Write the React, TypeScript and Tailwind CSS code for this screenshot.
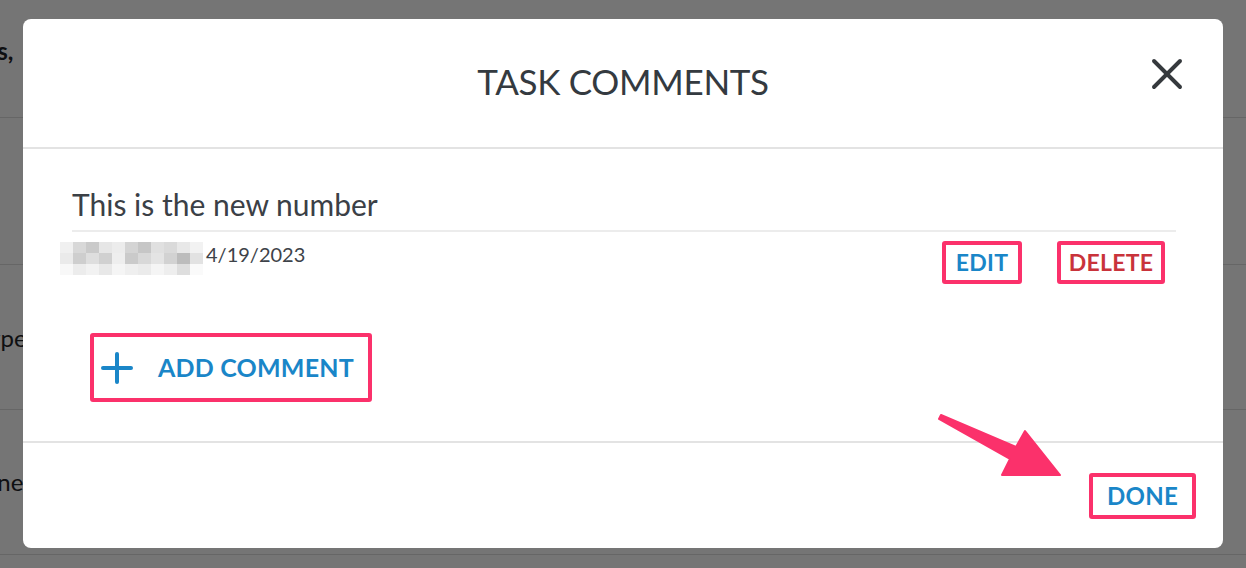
import { X, Plus } from "lucide-react";

const PIXELS = [
  ["bg-[#f0f0f0]", "bg-[#d8d8d8]", "bg-[#cacaca]", "bg-[#e6e6e6]", "bg-[#ececec]", "bg-[#d4d4d4]", "bg-[#c6c6c6]", "bg-[#e0e0e0]", "bg-[#dadada]", "bg-[#e8e8e8]", "bg-[#f2f2f2]"],
  ["bg-[#eaeaea]", "bg-[#cecece]", "bg-[#dedede]", "bg-[#d0d0d0]", "bg-[#eeeeee]", "bg-[#cacaca]", "bg-[#d8d8d8]", "bg-[#e4e4e4]", "bg-[#d2d2d2]", "bg-[#bcbcbc]", "bg-[#e2e2e2]"],
  ["bg-[#f8f8f8]", "bg-[#ececec]", "bg-[#f2f2f2]", "bg-[#e8e8e8]", "bg-[#f5f5f5]", "bg-[#efefef]", "bg-[#ebebeb]", "bg-[#f5f5f5]", "bg-[#eeeeee]", "bg-[#dedede]", "bg-[#fafafa]"],
];

function Blurred() {
  return (
    <div className="flex flex-col">
      {PIXELS.map((row, i) => (
        <div key={i} className="flex">
          {row.map((c, j) => (
            <div key={j} className={`w-[13px] h-[11px] ${c}`} />
          ))}
        </div>
      ))}
    </div>
  );
}

export default function App() {
  return (
    <div className="relative w-[1246px] h-[568px] overflow-hidden bg-white font-['Lato',sans-serif]">
      {/* page behind the modal */}
      <div className="flex flex-col text-[24px] text-[#1f2328]">
        <div className="h-[118px] border-b border-[#dedede] flex items-start pt-[33px]">
          <span className="ml-[-50px] font-bold whitespace-nowrap">Tasks,</span>
        </div>
        <div className="h-[147px] border-b border-[#dedede]" />
        <div className="h-[145px] border-b border-[#dedede] flex items-center pt-[2px]">
          <span className="ml-[-24px] whitespace-nowrap">Type</span>
        </div>
        <div className="h-[145px] border-b border-[#dedede] flex items-center">
          <span className="ml-[-44px] whitespace-nowrap">Phone</span>
        </div>
      </div>

      <div className="absolute inset-0 bg-black/[0.54]" />

      <div className="absolute left-[23px] top-[19px] w-[1200px] h-[529px] bg-white rounded-[8px] flex flex-col">
        <div className="relative h-[130px] border-b-2 border-[#e3e3e3] flex items-center justify-center">
          <h2 className="text-[35px] text-[#343a40] tracking-[-0.3px] mt-[-4px]">TASK COMMENTS</h2>
          <X className="absolute right-[30px] top-[29px] text-[#35393d]" size={52} strokeWidth={1.8} />
        </div>

        <div className="flex-1 flex flex-col pl-[49px] pr-[47px] border-b-2 border-[#e3e3e3]">
          <p className="mt-[37px] text-[30px] leading-[36px] text-[#3b4046]">This is the new number</p>
          <div className="h-[2px] bg-[#ececec] mt-[8px]" />
          <div className="flex items-start mt-[10px] ml-[-12px]">
            <Blurred />
            <span className="ml-[3px] mt-[-1px] text-[20px] text-[#3e4349] leading-[26px]">4/19/2023</span>
            <div className="ml-auto flex gap-[35px] mt-[-1px] mr-[11px]">
              <button className="h-[43px] w-[80px] border-[4px] border-[#fb316b] rounded-[3px] text-[23px] font-bold text-[#1a86c8] tracking-[0.3px]">
                EDIT
              </button>
              <button className="h-[43px] w-[108px] border-[4px] border-[#fb316b] rounded-[3px] text-[23px] font-bold text-[#c9333b] tracking-[0.3px]">
                DELETE
              </button>
            </div>
          </div>
          <div className="mt-[49px] ml-[18px]">
            <button className="h-[69px] w-[282px] flex items-center border-[4px] border-[#fb316b] rounded-[3px] text-[#1a86c8]">
              <Plus className="ml-[-1px]" size={48} strokeWidth={2} />
              <span className="ml-[17px] text-[25px] font-bold tracking-[0.2px]">ADD COMMENT</span>
            </button>
          </div>
        </div>

        <div className="h-[105px] flex items-center justify-end pr-[27px]">
          <button className="h-[46px] w-[107px] border-[4px] border-[#fb316b] rounded-[3px] text-[24px] font-bold text-[#1a86c8] tracking-[0.3px]">
            DONE
          </button>
        </div>
      </div>

      {/* annotation arrow */}
      <svg className="absolute inset-0 pointer-events-none" width="1246" height="568" viewBox="0 0 1246 568">
        <polygon
          points="941,415 1016,447 1025,431 1060,475 1002,475 1010,459 939,419"
          fill="#fb316b"
          stroke="#fb316b"
          strokeWidth="2"
          strokeLinejoin="round"
        />
      </svg>
    </div>
  );
}
